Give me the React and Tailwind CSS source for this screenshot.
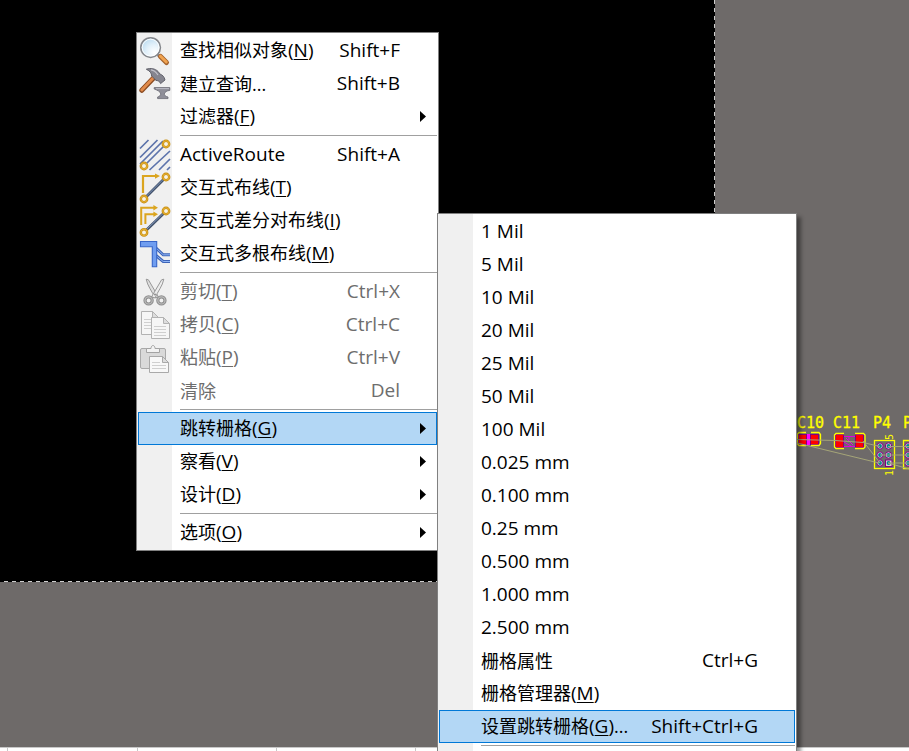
import React from 'react';

const FONT = "font-['Open_Sans','Noto_Sans_CJK_SC',sans-serif]";

function Ring({ cx, cy }) {
  return (
    <g fill="none">
      <circle cx={cx} cy={cy} r="3.2" fill="#f7f3e6" stroke="#c98f10" strokeWidth="2.4" />
      <circle cx={cx} cy={cy} r="3.2" stroke="#e9b53a" strokeWidth="0.9" />
    </g>
  );
}

function Svg({ children }) {
  return (
    <svg className="block h-8 w-8" viewBox="0 0 32 32" aria-hidden="true">
      {children}
    </svg>
  );
}

function SearchIcon() {
  return (
    <Svg>
      <defs>
        <radialGradient id="lens" cx="0.7" cy="0.75" r="0.8">
          <stop offset="0" stopColor="#ffffff" />
          <stop offset="0.5" stopColor="#e3f1fa" />
          <stop offset="1" stopColor="#bcdcf0" />
        </radialGradient>
      </defs>
      <path d="M18.5 19.5l3 3" stroke="#8f8f96" strokeWidth="3" />
      <path d="M21.5 21.5l6 6" stroke="#a3622c" strokeWidth="5" strokeLinecap="round" />
      <path d="M21.5 21.2l5.8 5.8" stroke="#f0a350" strokeWidth="3" strokeLinecap="round" />
      <circle cx="11.6" cy="12.6" r="9.8" fill="url(#lens)" stroke="#85878c" strokeWidth="1.6" />
      <circle cx="11.6" cy="12.6" r="8.4" fill="none" stroke="#ffffff" strokeWidth="0.9" />
    </Svg>
  );
}

function HammerIcon() {
  return (
    <Svg>
      <path d="M15 9.5L2.8 22.3" stroke="#8a4b22" strokeWidth="5" strokeLinecap="round" />
      <path d="M14.6 9.5L2.8 22" stroke="#e28b4b" strokeWidth="2.8" strokeLinecap="round" />
      <path d="M7.3 1.2C12 -0.2 16 0.6 19 3.4l2.2 2.8c2.2.6 4.2 2.6 4.8 5.8l-4.4 3.6c-.8-2.2-2.4-3-4.6-3.2L12.6 8c.2-2.6-1.6-5-5.3-6.8z" fill="#85858f" stroke="#585862" strokeWidth="0.9" />
      <path d="M12 1.8c3 .2 5 2.2 7 5.2" stroke="#c3c3cc" strokeWidth="1.2" fill="none" />
      <path d="M15.2 19.6h15.6v2.8c-3 .2-5 1.6-5.6 3.6.2 1.4 1.4 2.4 3.8 3v1.6H18.6V29c2-.6 3-1.6 3.2-3-.4-2.4-3-3.6-6.6-5z" fill="#8e8e98" stroke="#686872" strokeWidth="0.8" />
      <path d="M17 20.6h13" stroke="#bcbcc6" strokeWidth="1" />
    </Svg>
  );
}

function ActiveRouteIcon() {
  return (
    <Svg>
      <g stroke="#5c73ab" strokeWidth="1.7">
        <path d="M1 9.5L9.5 1M1 18.5L18.5 1M7 25L24.5 7.5M10.5 31L31 12M20 31L31 20M1 25L24 2M28 31l3-3" />
      </g>
      <Ring cx={27} cy={5} />
      <Ring cx={5} cy={27} />
    </Svg>
  );
}

function RouteIcon() {
  return (
    <Svg>
      <path d="M7 25L25 7" stroke="#42526b" strokeWidth="2.8" />
      <path d="M7 24.6L24.6 7" stroke="#8298bd" strokeWidth="1" />
      <path d="M4 21V4h14" fill="none" stroke="#dba51f" strokeWidth="2.2" />
      <path d="M16 1.4L21 4l-5 2.8z" fill="#dba51f" />
      <Ring cx={27} cy={5} />
      <Ring cx={5} cy={27} />
    </Svg>
  );
}

function DiffRouteIcon() {
  return (
    <Svg>
      <path d="M7 25.5L25 8" stroke="#42526b" strokeWidth="2.8" />
      <path d="M7 25L24.6 8" stroke="#8298bd" strokeWidth="1" />
      <path d="M2.2 20V2.8H16M6.4 19V9.2H16" fill="none" stroke="#dba51f" strokeWidth="2" />
      <path d="M14.4 0L19 2.8l-4.6 2.8zM14.4 6.4L19 9.2 14.4 12z" fill="#dba51f" />
      <Ring cx={27} cy={6} />
      <Ring cx={5} cy={27.4} />
    </Svg>
  );
}

function MultiRouteIcon() {
  return (
    <Svg>
      <path d="M17 10l7.2 6.8H31M17 17.5l7.2 6H31" fill="none" stroke="#3d64b8" strokeWidth="3" />
      <path d="M17 10l7.2 6.8H31M17 17.5l7.2 6H31" fill="none" stroke="#8fb4f5" strokeWidth="1" />
      <path d="M1.5 3.5h16.2v25.3h-4.4V8.8H1.5z" fill="#6f9df0" stroke="#3765c8" strokeWidth="1.1" />
    </Svg>
  );
}

function CutIcon() {
  return (
    <Svg>
      <path d="M7.2 3.2l2.2.6 10 17-3.4 1.2C13.5 16 8.2 9.5 7.2 3.2z" fill="#dedede" stroke="#8e8e8e" strokeWidth="0.9" />
      <path d="M24.8 3.2l-2.2.6-10 17 3.4 1.2c2.5-6 7.8-12.5 8.8-18.8z" fill="#ececec" stroke="#8e8e8e" strokeWidth="0.9" />
      <g fill="none" stroke="#8e8e8e" strokeWidth="3.2">
        <circle cx="9.6" cy="24.4" r="3.6" />
        <circle cx="22.4" cy="24.4" r="3.6" />
      </g>
      <g fill="none" stroke="#bbbbbb" strokeWidth="1.2">
        <circle cx="9.6" cy="24.4" r="3.6" />
        <circle cx="22.4" cy="24.4" r="3.6" />
      </g>
      <circle cx="16" cy="18.5" r="1" fill="#8a8a8a" />
    </Svg>
  );
}

function CopyIcon() {
  return (
    <Svg>
      <g stroke="#b2b2b2" fill="#f6f6f6">
        <path d="M2.5 2.5h11l6 6v17h-17z" />
        <path d="M13.5 2.5v6h6z" fill="#dddddd" />
        <path d="M5 10.5h7M5 13.5h7M5 16.5h7M5 19.5h7" stroke="#cfcfcf" />
        <path d="M12.5 8.5h12l6 6v15h-18z" />
        <path d="M24.5 8.5v6h6z" fill="#dddddd" />
        <path d="M15 17.5h12M15 20.5h12M15 23.5h12M15 26.5h12" stroke="#cfcfcf" />
      </g>
    </Svg>
  );
}

function PasteIcon() {
  return (
    <Svg>
      <rect x="1.5" y="6.5" width="25" height="20" rx="1.5" fill="#d9d9d9" stroke="#a9a9a9" />
      <path d="M7.5 10.5v-4h4.5c0-4 4-4 4 0h4.5v4z" fill="#f2f2f2" stroke="#a3a3a3" />
      <path d="M10.5 14.5h13l6 6v10h-19z" fill="#f8f8f8" stroke="#a9a9a9" />
      <path d="M23.5 14.5v6h6z" fill="#dddddd" stroke="#a9a9a9" />
      <path d="M13 20.5h8M13 23.5h14M13 26.5h14" stroke="#cfcfcf" />
    </Svg>
  );
}

const contextMenu = [
  { label: '查找相似对象', mnemonic: 'N', shortcut: 'Shift+F', icon: SearchIcon },
  { label: '建立查询...', shortcut: 'Shift+B', icon: HammerIcon },
  { label: '过滤器', mnemonic: 'F', submenu: true },
  'separator',
  { label: 'ActiveRoute', latin: true, shortcut: 'Shift+A', icon: ActiveRouteIcon },
  { label: '交互式布线', mnemonic: 'T', icon: RouteIcon },
  { label: '交互式差分对布线', mnemonic: 'I', icon: DiffRouteIcon },
  { label: '交互式多根布线', mnemonic: 'M', icon: MultiRouteIcon },
  'separator',
  { label: '剪切', mnemonic: 'T', shortcut: 'Ctrl+X', icon: CutIcon, disabled: true },
  { label: '拷贝', mnemonic: 'C', shortcut: 'Ctrl+C', icon: CopyIcon, disabled: true },
  { label: '粘贴', mnemonic: 'P', shortcut: 'Ctrl+V', icon: PasteIcon, disabled: true },
  { label: '清除', shortcut: 'Del', disabled: true },
  'separator',
  { label: '跳转栅格', mnemonic: 'G', submenu: true, active: true },
  { label: '察看', mnemonic: 'V', submenu: true },
  { label: '设计', mnemonic: 'D', submenu: true },
  'separator',
  { label: '选项', mnemonic: 'O', submenu: true },
];

const gridMenu = [
  { label: '1 Mil', latin: true },
  { label: '5 Mil', latin: true },
  { label: '10 Mil', latin: true },
  { label: '20 Mil', latin: true },
  { label: '25 Mil', latin: true },
  { label: '50 Mil', latin: true },
  { label: '100 Mil', latin: true },
  { label: '0.025 mm', latin: true },
  { label: '0.100 mm', latin: true },
  { label: '0.25 mm', latin: true },
  { label: '0.500 mm', latin: true },
  { label: '1.000 mm', latin: true },
  { label: '2.500 mm', latin: true },
  { label: '栅格属性', shortcut: 'Ctrl+G' },
  { label: '栅格管理器', mnemonic: 'M' },
  { label: '设置跳转栅格', mnemonic: 'G', suffix: '...', shortcut: 'Shift+Ctrl+G', active: true },
  'separator',
];

function MenuItem({ item }) {
  const Icon = item.icon;
  const tone = item.disabled ? 'text-[#6d6d6d]' : 'text-black';
  const fill = item.active ? 'border-[#0078d7] bg-[#b3d7f5]' : 'border-transparent';
  return (
    <button
      type="button"
      role="menuitem"
      disabled={item.disabled}
      aria-haspopup={item.submenu ? 'menu' : undefined}
      className={`flex h-[33px] w-full items-center border text-left text-lg leading-none whitespace-nowrap ${tone} ${fill}`}
    >
      <span className="w-[41px] shrink-0">{Icon && <Icon />}</span>
      <span className={`flex-1 ${item.latin ? 'text-[19px] leading-none' : ''}`}>
        {item.label}
        {item.mnemonic && (
          <span className="text-[19px] leading-none">
            (<span className="underline decoration-1 underline-offset-2">{item.mnemonic}</span>)
          </span>
        )}
        {item.suffix}
      </span>
      {item.shortcut && <span className="pr-9 text-[19px] leading-none">{item.shortcut}</span>}
      {item.submenu && (
        <svg className="mr-2.5 h-[11px] w-1.5" viewBox="0 0 6 11" aria-hidden="true">
          <path d="M0 0l6 5.5L0 11z" fill="#000" />
        </svg>
      )}
    </button>
  );
}

function Menu({ items, label, className }) {
  return (
    <div
      role="menu"
      aria-label={label}
      className={`absolute border border-[#808080] bg-white bg-[linear-gradient(90deg,#f0f0f0_35px,#ffffff_35px)] px-px pt-px ${className}`}
    >
      {items.map((item, i) =>
        item === 'separator' ? (
          <div key={i} role="separator" className="ml-[42px] h-[5px] pt-0.5">
            <div className="h-px bg-[#a0a0a0]" />
          </div>
        ) : (
          <MenuItem key={i} item={item} />
        )
      )}
    </div>
  );
}

function Components() {
  const rows = [36, 45, 53];
  return (
    <svg
      className="absolute top-[410px] left-[797px] h-20 w-28 font-['DejaVu_Sans_Mono',monospace]"
      viewBox="0 0 112 80"
      role="img"
      aria-label="C10 C11 P4"
    >
      <g fill="#ffff00" stroke="#ffff00" strokeWidth="0.3" fontSize="15">
        <text x="0" y="18">C10</text>
        <text x="36" y="18">C11</text>
        <text x="76" y="18">P4</text>
        <text x="106" y="18">P</text>
      </g>
      <g fill="#ffff00" fontSize="10">
        <text transform="translate(96 30) rotate(-90)">5</text>
        <text transform="translate(96 66) rotate(-90)">1</text>
      </g>
      <rect x="9" y="24" width="4" height="11" fill="#ff00ff" />
      <g fill="#ff0000" stroke="#800080">
        <rect x="1.5" y="24.5" width="8" height="10" />
        <rect x="13.5" y="24.5" width="8" height="10" />
        <rect x="38.5" y="24.5" width="8" height="13" />
        <rect x="58.5" y="24.5" width="8" height="13" />
      </g>
      <path d="M47 26.5h11M47 36.5h11M49 28l7 7M52 26v4M47 32l7 4" stroke="#e000e0" fill="none" />
      <g fill="none" stroke="#ffff00" strokeWidth="1.3">
        <path d="M9 22.5H2L0.5 24v10L2 35.5h7M14 22.5h8l1.5 2v9l-1.5 2h-8" />
        <path d="M47 23.5h-8l-1.5 1.5v12l1.5 1.5h8M58 23.5h8.5l1.5 1.5v12l-1.5 1.5H58" />
        <rect x="77.5" y="30.5" width="20" height="28" />
        <path d="M112 30.5h-5.5v28h5.5" />
      </g>
      <g fill="#d8c8d8" stroke="#800080" strokeWidth="1">
        {rows.map((y) => (
          <React.Fragment key={y}>
            <circle cx="83" cy={y} r="3.2" />
            {y === 53 ? (
              <rect x="88.5" y="50" width="6.5" height="6.5" />
            ) : (
              <circle cx="91.5" cy={y} r="3.2" />
            )}
            <circle cx="111" cy={y} r="3.2" />
          </React.Fragment>
        ))}
      </g>
      <g fill="#008b8b">
        {rows.map((y) => (
          <React.Fragment key={y}>
            <circle cx="83" cy={y} r="1.9" />
            <circle cx="91.5" cy={y} r="1.9" />
            <circle cx="111" cy={y} r="1.9" />
          </React.Fragment>
        ))}
      </g>
      <path
        d="M0 33L82 53M0 29.5l38 1 28 2 17 4M66 31l17 22M91 36.5h21M83 45h29M91 53h21M91 53l21 6"
        fill="none"
        stroke="#a5a578"
      />
    </svg>
  );
}

export default function App() {
  return (
    <div className={`relative flex h-screen flex-col overflow-hidden bg-[#6e6a69] ${FONT}`}>
      <main className="relative min-h-0 flex-1 overflow-hidden">
        <div className="flex h-[581px] w-[715px] bg-black">
          <div className="flex-1" />
          <div className="w-px bg-[repeating-linear-gradient(180deg,#cccccc_0px,#cccccc_4px,#000000_4px,#000000_8px)]" />
        </div>
        <div className="h-px w-[715px] bg-[repeating-linear-gradient(90deg,#000000_0px,#000000_4px,#cccccc_4px,#cccccc_8px)]" />
        <Components />
      </main>
      <footer className="flex h-1 border-t border-[#c8c8c8] bg-white">
        <div className="w-2 border-r border-[#c8c8c8]" />
        <div className="w-[130px] border-r border-[#c8c8c8]" />
        <div className="w-[139px] border-r border-[#c8c8c8]" />
        <div className="w-[139px] border-r border-[#c8c8c8]" />
      </footer>
      <Menu items={contextMenu} label="PCB" className="top-8 left-[136px] w-[303px] pb-px" />
      <Menu
        items={gridMenu}
        label="跳转栅格"
        className="top-[213px] left-[437px] w-[360px] pb-2 shadow-[4px_4px_4px_rgba(0,0,0,0.4)]"
      />
    </div>
  );
}
